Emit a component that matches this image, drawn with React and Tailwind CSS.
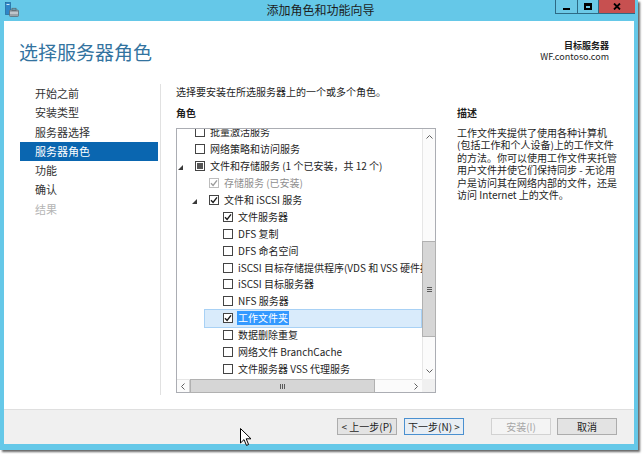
import React from 'react';

const rows = [
  { level: 0, label: '批量激活服务', cb: 'off' },
  { level: 0, label: '网络策略和访问服务', cb: 'off' },
  { level: 0, label: '文件和存储服务 (1 个已安装，共 12 个)', cb: 'partial', exp: true },
  { level: 1, label: '存储服务 (已安装)', cb: 'disabled' },
  { level: 1, label: '文件和 iSCSI 服务', cb: 'on', exp: true },
  { level: 2, label: '文件服务器', cb: 'on' },
  { level: 2, label: 'DFS 复制', cb: 'off' },
  { level: 2, label: 'DFS 命名空间', cb: 'off' },
  { level: 2, label: 'iSCSI 目标存储提供程序(VDS 和 VSS 硬件提供程序)', cb: 'off' },
  { level: 2, label: 'iSCSI 目标服务器', cb: 'off' },
  { level: 2, label: 'NFS 服务器', cb: 'off' },
  { level: 2, label: '工作文件夹', cb: 'on', selected: true },
  { level: 2, label: '数据删除重复', cb: 'off' },
  { level: 2, label: '网络文件 BranchCache', cb: 'off' },
  { level: 2, label: '文件服务器 VSS 代理服务', cb: 'off' },
];

const indent = { 0: 'pl-0', 1: 'pl-[14px]', 2: 'pl-[28px]' };

const steps = [
  { name: '开始之前' },
  { name: '安装类型' },
  { name: '服务器选择' },
  { name: '服务器角色', active: true },
  { name: '功能' },
  { name: '确认' },
  { name: '结果', disabled: true },
];

const desc = [
  '工作文件夹提供了使用各种计算机',
  '(包括工作和个人设备)上的工作文件',
  '的方法。你可以使用工作文件夹托管',
  '用户文件并使它们保持同步 - 无论用',
  '户是访问其在网络内部的文件，还是',
  '访问 Internet 上的文件。',
];

function CheckMark({ color }) {
  return (
    <svg width="8" height="8" viewBox="0 0 8 8">
      <path d="M1 4.2 L3.1 6.4 L7 1.4" fill="none" stroke={color} strokeWidth="1.4" />
    </svg>
  );
}

function Box({ state }) {
  const border = state === 'disabled' ? 'border-[#bdbdbd]' : 'border-[#444]';
  return (
    <span className={`w-[10px] h-[10px] border ${border} bg-white flex items-center justify-center shrink-0`}>
      {state === 'on' && <CheckMark color="#1a1a1a" />}
      {state === 'disabled' && <CheckMark color="#9c9c9c" />}
      {state === 'partial' && <span className="w-[6px] h-[6px] bg-[#555]" />}
    </span>
  );
}

function Row({ row }) {
  return (
    <div className={`h-[16.9px] flex ${indent[row.level]}`}>
      <div
        className={`flex-1 flex items-center ${
          row.selected ? 'bg-[#d9ebfb] border border-[#a8d1f5] -my-px -ml-px' : ''
        }`}
      >
        <span className="w-[18px] shrink-0 flex items-center pl-[1px] pt-[3px]">
          {row.exp && (
            <svg width="5" height="5" viewBox="0 0 5 5">
              <polygon points="5,0 5,5 0,5" fill="#3a3a3a" />
            </svg>
          )}
        </span>
        <Box state={row.cb} />
        <span
          className={`whitespace-nowrap leading-[14px] ${
            row.cb === 'disabled' ? 'text-[#8f8f8f]' : 'text-[#1e1e1e]'
          } ${row.selected ? 'bg-[#3399ff] text-white ml-[4px] px-[1px]' : 'ml-[5px]'}`}
        >
          {row.label}
        </span>
      </div>
    </div>
  );
}

function Btn({ children, kind }) {
  const styles = {
    normal: 'bg-[#e3e3e3] border-[#acacac] text-[#1e1e1e]',
    focus: 'bg-[#e8eef4] border-[#4a90d0] text-[#1e1e1e]',
    disabled: 'bg-[#f4f4f4] border-[#d2d2d2] text-[#a6a6a6]',
  };
  return (
    <div
      className={`h-[17px] w-[60px] border flex items-center justify-center text-[10px] leading-[15px] ${styles[kind]}`}
    >
      {children}
    </div>
  );
}

function WinButtons() {
  return (
    <div className="flex h-[14px] bg-[#2d6a85] pl-px pb-px gap-px">
      <div className="w-[21px] min-w-[21px] bg-[#6cc9e7] flex items-end justify-center pb-[3px]">
        <div className="w-[7px] h-[2px] bg-black" />
      </div>
      <div className="w-[20px] min-w-[20px] bg-[#6cc9e7] flex items-center justify-center">
        <div className="w-[8px] h-[7px] border-2 border-black border-t-[3px]" />
      </div>
      <div className="w-[36px] min-w-[36px] bg-[rgb(199,80,80)] flex items-center justify-center">
        <svg width="8" height="7" viewBox="0 0 8 7">
          <path d="M1 0.5 L7 6.5 M7 0.5 L1 6.5" stroke="#000" strokeWidth="1.8" />
        </svg>
      </div>
    </div>
  );
}

export default function App() {
  return (
    <div className="w-[644px] h-[454px] bg-white overflow-hidden relative font-['Noto_Sans_CJK_SC','Noto_Sans',sans-serif]">
      <div className="w-[638px] h-[450px] bg-[#65c8e8] flex flex-col shadow-[2px_2px_2px_rgba(0,0,0,0.6)]">
        {/* title bar */}
        <div className="h-[21px] flex items-start shrink-0">
          <div className="w-[80px] pl-[5px] pt-[2px]">
            <svg width="14" height="16" viewBox="0 0 14 16">
              <rect x="0.5" y="0.5" width="5" height="12" fill="#2f86c8" stroke="#1d5e92" strokeWidth="0.6" />
              <rect x="1.5" y="2" width="3" height="1" fill="#cfe6f6" />
              <rect x="4.5" y="8" width="9" height="6.5" rx="1" fill="#9aa3aa" stroke="#5d666d" strokeWidth="0.7" />
              <rect x="7" y="6.3" width="4" height="2" fill="none" stroke="#5d666d" strokeWidth="0.8" />
              <rect x="5" y="10.5" width="8" height="1" fill="#e6e9eb" />
            </svg>
          </div>
          <div className="flex-1 text-center text-[12px] leading-[20px] text-[#1c1c1c] pl-[6px]">添加角色和功能向导</div>
          <div className="mr-[3px]">
            <WinButtons />
          </div>
        </div>

        {/* client area */}
        <div className="flex-1 mx-[4px] mb-[6px] flex flex-col">
          <div className="flex-1 bg-white flex flex-col">
            <div className="h-[63px] flex justify-between pl-[15px] pr-[25px] pt-[19px] shrink-0">
              <div className="text-[19px] leading-[24px] text-[#33739f]">选择服务器角色</div>
              <div className="text-right text-[9px] leading-[11px] text-[#1e1e1e]">
                <div className="font-bold">目标服务器</div>
                <div>WF.contoso.com</div>
              </div>
            </div>

            <div className="flex-1 flex pb-[14px]">
              {/* steps */}
              <div className="w-[156px] pl-[16px] pr-[2px]">
                {steps.map((s) => (
                  <div
                    key={s.name}
                    className={`h-[19.3px] leading-[19.3px] pl-[15px] text-[11px] ${
                      s.active ? 'bg-[#0a66b0] text-white' : s.disabled ? 'text-[#b5b5b5]' : 'text-[#333]'
                    }`}
                  >
                    {s.name}
                  </div>
                ))}
              </div>
              <div className="w-px bg-[#e1e1e1]" />

              {/* main */}
              <div className="flex-1 pl-[15px] pt-[1px] text-[10px]">
                <div className="leading-[14px] text-[#1e1e1e]">选择要安装在所选服务器上的一个或多个角色。</div>
                <div className="flex mt-[7px] gap-[21px]">
                  <div className="w-[260px] flex flex-col">
                    <div className="leading-[14px] font-bold text-[#1e1e1e]">角色</div>
                    <div className="mt-[8px] h-[265px] border border-[#abadb3] grid grid-cols-[1fr_13px] grid-rows-[1fr_13px]">
                      <div className="overflow-hidden">
                        <div className="-mt-[5px]">
                          {rows.map((r) => (
                            <Row key={r.label} row={r} />
                          ))}
                        </div>
                      </div>
                      {/* vertical scrollbar */}
                      <div className="bg-[#fbfbfb] border-l border-[#e6e6e6] flex flex-col">
                        <div className="h-[16px] flex items-center justify-center">
                          <svg width="7" height="4" viewBox="0 0 7 4">
                            <path d="M0.5 3.5 L3.5 0.5 L6.5 3.5" fill="none" stroke="#606060" strokeWidth="1" />
                          </svg>
                        </div>
                        <div className="h-[96px] mt-[96px] -mx-px bg-[#d6d6d6] border border-[#b1b1b1] flex items-center justify-center">
                          <svg width="5" height="5" viewBox="0 0 5 5">
                            <path d="M0 0.5 H5 M0 2.5 H5 M0 4.5 H5" stroke="#5a5a5a" strokeWidth="1" />
                          </svg>
                        </div>
                        <div className="flex-1" />
                        <div className="h-[16px] flex items-center justify-center">
                          <svg width="7" height="4" viewBox="0 0 7 4">
                            <path d="M0.5 0.5 L3.5 3.5 L6.5 0.5" fill="none" stroke="#606060" strokeWidth="1" />
                          </svg>
                        </div>
                      </div>
                      {/* horizontal scrollbar */}
                      <div className="bg-[#fbfbfb] border-t border-[#e6e6e6] flex">
                        <div className="w-[13px] flex items-center justify-center border-r border-[#d0d0d0]">
                          <svg width="4" height="7" viewBox="0 0 4 7">
                            <path d="M3.5 0.5 L0.5 3.5 L3.5 6.5" fill="none" stroke="#606060" strokeWidth="1" />
                          </svg>
                        </div>
                        <div className="w-[185px] -my-px bg-[#d6d6d6] border border-[#b1b1b1] flex items-center justify-center">
                          <svg width="5" height="5" viewBox="0 0 5 5">
                            <path d="M0.5 0 V5 M2.5 0 V5 M4.5 0 V5" stroke="#5a5a5a" strokeWidth="1" />
                          </svg>
                        </div>
                        <div className="flex-1" />
                        <div className="w-[13px] flex items-center justify-center">
                          <svg width="4" height="7" viewBox="0 0 4 7">
                            <path d="M0.5 0.5 L3.5 3.5 L0.5 6.5" fill="none" stroke="#606060" strokeWidth="1" />
                          </svg>
                        </div>
                      </div>
                      <div className="bg-[#f0f0f0]" />
                    </div>
                  </div>
                  <div className="flex flex-col text-[#1e1e1e]">
                    <div className="leading-[14px] font-bold">描述</div>
                    <div className="mt-[7px] leading-[12.4px]">
                      {desc.map((d) => (
                        <div key={d} className="whitespace-nowrap">
                          {d}
                        </div>
                      ))}
                    </div>
                  </div>
                </div>
              </div>
            </div>
          </div>

          {/* footer */}
          <div className="h-[35px] bg-[#f0f0f0] border-t border-[#dfdfdf] flex justify-end pt-[8px] pr-[17px] shrink-0">
            <Btn kind="normal">&lt; 上一步(P)</Btn>
            <div className="ml-[7px]">
              <Btn kind="focus">下一步(N) &gt;</Btn>
            </div>
            <div className="ml-[27px]">
              <Btn kind="disabled">安装(I)</Btn>
            </div>
            <div className="ml-[6px]">
              <Btn kind="normal">取消</Btn>
            </div>
          </div>
        </div>
      </div>

      {/* mouse pointer */}
      <svg className="absolute left-[240px] top-[428px]" width="13" height="19" viewBox="0 0 13 19">
        <path d="M0.5 0.5 L0.5 15 L4 11.6 L6.5 17.4 L8.6 16.5 L6.2 10.8 L11 10.8 Z" fill="#fff" stroke="#000" strokeWidth="1" />
      </svg>
    </div>
  );
}
